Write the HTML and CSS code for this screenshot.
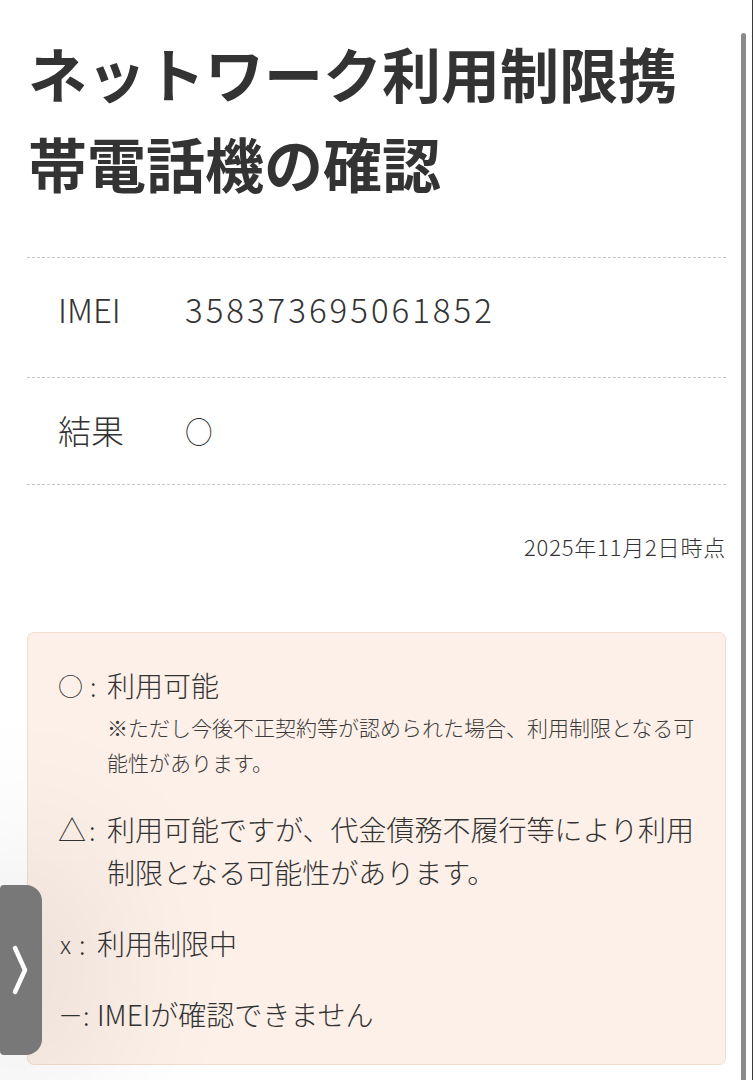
FILE: index.html
```html
<!DOCTYPE html>
<html lang="ja">
<head>
<meta charset="utf-8">
<title>ネットワーク利用制限携帯電話機の確認</title>
<link rel="stylesheet" href="styles.css">
</head>
<body>
<main class="page">
  <h1 class="title">ネットワーク利用制限携帯電話機の確認</h1>

  <dl class="result">
    <div class="row row-imei">
      <dt class="label">IMEI</dt>
      <dd class="value value-num">358373695061852</dd>
    </div>
    <div class="row">
      <dt class="label">結果</dt>
      <dd class="value"><span class="circle">○</span></dd>
    </div>
  </dl>

  <p class="stamp">2025年11月2日時点</p>

  <section class="legend">
    <div class="item">
      <span class="mark"><span class="sym sym-circle">○</span><span class="colon">:</span></span>
      <div class="body">
        <p class="line">利用可能</p>
        <p class="note">※ただし今後不正契約等が認められた場合、利用制限となる可能性があります。</p>
      </div>
    </div>
    <div class="item">
      <span class="mark"><span class="sym">△</span><span class="colon">:</span></span>
      <div class="body">
        <p class="line">利用可能ですが、代金債務不履行等により利用制限となる可能性があります。</p>
      </div>
    </div>
    <div class="item">
      <span class="mark mark-narrow"><span class="sym sym-small">x</span><span class="colon">:</span></span>
      <div class="body">
        <p class="line">利用制限中</p>
      </div>
    </div>
    <div class="item">
      <span class="mark mark-narrow"><span class="sym sym-dash">－</span><span class="colon">:</span></span>
      <div class="body">
        <p class="line">IMEIが確認できません</p>
      </div>
    </div>
  </section>
</main>

<div class="side-tab">
  <svg class="chev" width="20" height="52" viewBox="0 0 20 52">
    <path d="M5 4 L15 26 L5 48" fill="none" stroke="#fff" stroke-width="4.5" stroke-linecap="round" stroke-linejoin="round"/>
  </svg>
</div>
<div class="scrollbar"></div>
<div class="edge"></div>
</body>
</html>
```

FILE: styles.css
```css
* { box-sizing: border-box; }

html, body {
  margin: 0;
  padding: 0;
  background: #fff;
}

body {
  font-family: "Noto Sans CJK JP", "Noto Sans", sans-serif;
  font-weight: 300;
  color: #333;
  overflow: hidden;
}

.page {
  padding: 28px 27px 0 27px;
}

.title {
  margin: 0 0 49px 1px;
  font-size: 59px;
  line-height: 90px;
  font-weight: 700;
  color: #333;
}

.result {
  margin: 0;
  border-top: 1px dashed #c6c6c6;
}

.row {
  display: flex;
  align-items: center;
  padding: 27px 0 30px 31px;
  border-bottom: 1px dashed #c6c6c6;
  font-size: 33px;
  line-height: 48px;
}

.row-imei {
  padding-bottom: 44px;
}

.label {
  width: 127px;
  margin: 0;
}

.value {
  margin: 0;
}

.value-num {
  letter-spacing: 3px;
}

.circle {
  display: inline-block;
  font-size: 30px;
  transform: scaleX(0.92);
  transform-origin: left center;
}

.stamp {
  margin: 45px 0 0;
  text-align: right;
  font-size: 22px;
  line-height: 32px;
  letter-spacing: 0.8px;
  color: #333;
}

.legend {
  margin-top: 70px;
  padding: 31px 18px 28px 30px;
  background: #fdf0e8;
  border: 1px solid #f1ddd0;
  border-radius: 7px;
  display: flex;
  flex-direction: column;
  gap: 28px;
}

.item {
  display: flex;
  align-items: flex-start;
  font-size: 28px;
  line-height: 43px;
}

.mark {
  flex: none;
  width: 49px;
  display: flex;
  align-items: center;
}

.mark-narrow {
  width: 39px;
}

.sym {
  width: 30px;
  text-align: left;
}

.sym-circle {
  font-size: 25px;
  width: 31px;
}

.sym-small {
  width: 20px;
  font-size: 24px;
  padding-left: 2px;
}

.sym-dash {
  width: 24px;
  font-size: 25px;
}

.colon {
  font-size: 26px;
  margin-left: 1px;
}

.body {
  flex: 1;
  min-width: 0;
}

.line {
  margin: 0;
}

.note {
  margin: 3px 0 0;
  font-size: 21px;
  line-height: 35px;
  color: #3a3a3a;
}

.side-tab {
  position: fixed;
  left: 0;
  top: 885px;
  width: 42px;
  height: 170px;
  background: #787878;
  border-radius: 4px 16px 16px 4px;
  box-shadow: 0 0 160px 40px rgba(0, 0, 0, 0.1);
  display: flex;
  align-items: center;
  justify-content: center;
}

.chev {
  display: block;
  margin-right: 2px;
}

.scrollbar {
  position: fixed;
  right: 7px;
  top: 33px;
  bottom: 0;
  width: 5px;
  background: #8a8a8a;
  border-radius: 3px 3px 0 0;
}

.edge {
  position: fixed;
  right: 0;
  top: 0;
  bottom: 0;
  width: 1px;
  background: #3a3a3a;
}
```
